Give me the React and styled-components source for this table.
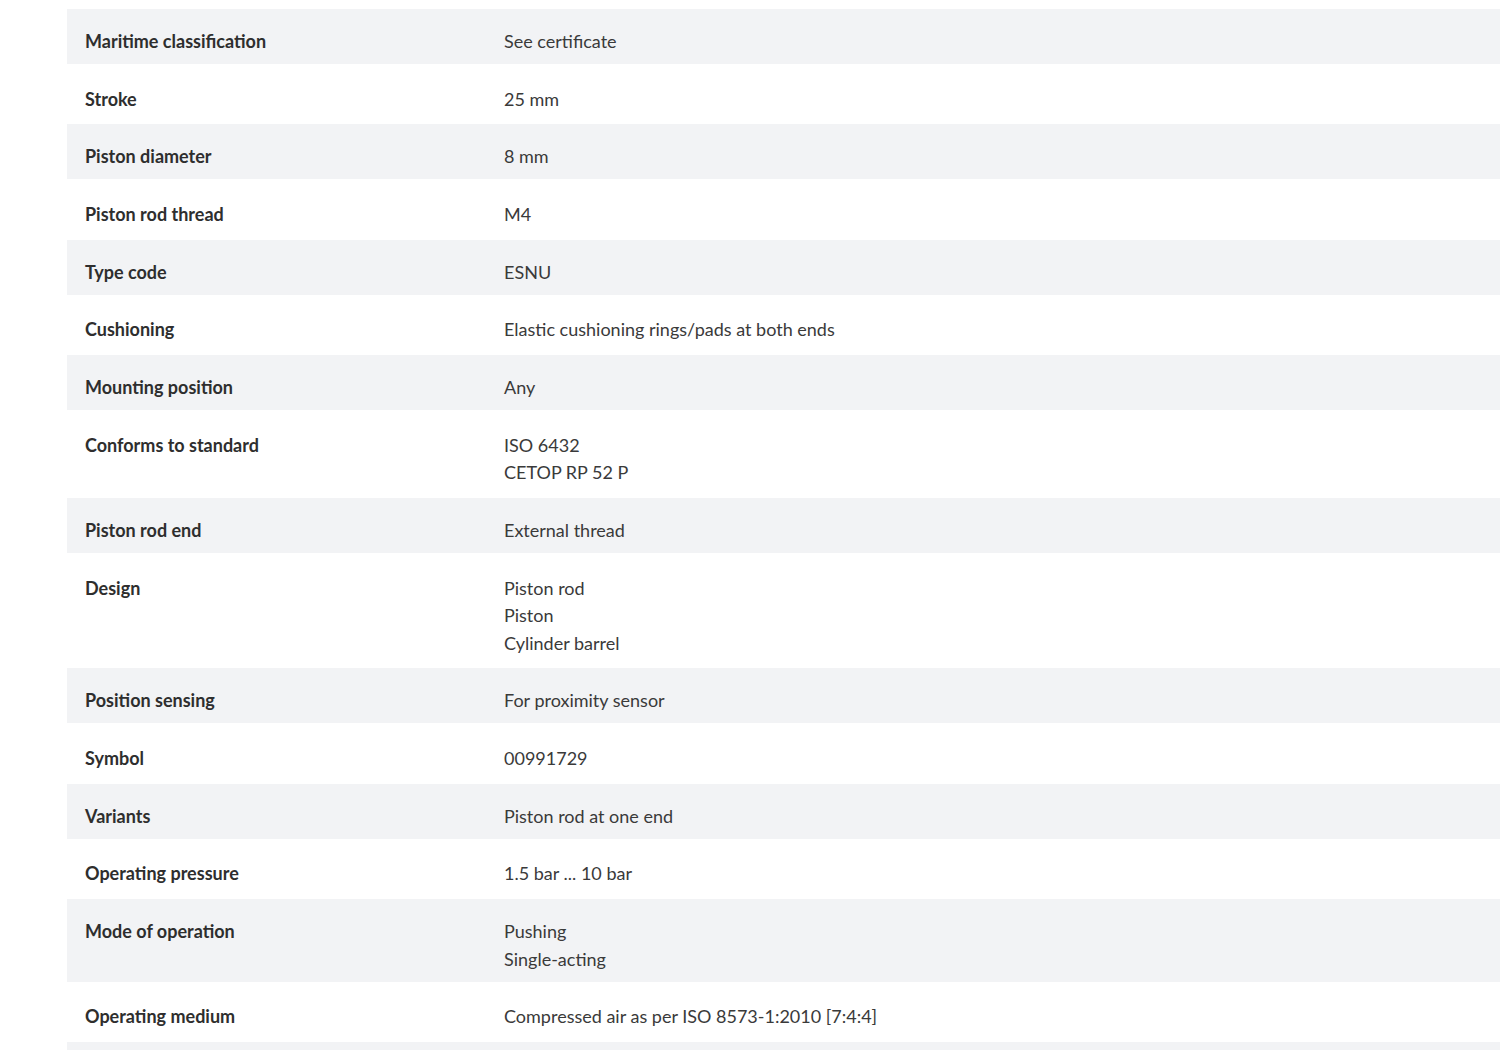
import styled, { createGlobalStyle } from "styled-components";

const GlobalStyle = createGlobalStyle`
  html, body {
    margin: 0;
    padding: 0;
    background: #ffffff;
  }
  body {
    font-family: Lato, "Liberation Sans", sans-serif;
    color: #333333;
  }
`;

const Page = styled.div`
  padding: 9px 0 0 67px;
  width: 1433px;
  height: 1041px;
  overflow: hidden;
`;

const Table = styled.div`
  display: flex;
  flex-direction: column;
`;

const Row = styled.div`
  display: grid;
  grid-template-columns: 437px 1fr;
  padding: 19px 0 8.5px;
  margin-bottom: 2.7px;
  background-color: ${(p) => (p.$shaded ? "#f2f3f5" : "#ffffff")};
  line-height: 27.5px;
  font-size: 18px;
`;

const Label = styled.div`
  padding-left: 18px;
  font-weight: 700;
  color: #2e2e2e;
`;

const Value = styled.div`
  display: flex;
  flex-direction: column;
  color: #3a3a3a;
`;

const specs = [
  ["Maritime classification", ["See certificate"]],
  ["Stroke", ["25 mm"]],
  ["Piston diameter", ["8 mm"]],
  ["Piston rod thread", ["M4"]],
  ["Type code", ["ESNU"]],
  ["Cushioning", ["Elastic cushioning rings/pads at both ends"]],
  ["Mounting position", ["Any"]],
  ["Conforms to standard", ["ISO 6432", "CETOP RP 52 P"]],
  ["Piston rod end", ["External thread"]],
  ["Design", ["Piston rod", "Piston", "Cylinder barrel"]],
  ["Position sensing", ["For proximity sensor"]],
  ["Symbol", ["00991729"]],
  ["Variants", ["Piston rod at one end"]],
  ["Operating pressure", ["1.5 bar ... 10 bar"]],
  ["Mode of operation", ["Pushing", "Single-acting"]],
  ["Operating medium", ["Compressed air as per ISO 8573-1:2010 [7:4:4]"]],
  ["", [""]],
];

const App = () => (
  <>
    <GlobalStyle />
    <Page>
      <Table>
        {specs.map(([label, values], i) => (
          <Row key={i} $shaded={i % 2 === 0}>
            <Label>{label}</Label>
            <Value>
              {values.map((v, j) => (
                <span key={j}>{v}</span>
              ))}
            </Value>
          </Row>
        ))}
      </Table>
    </Page>
  </>
);

export default App;
